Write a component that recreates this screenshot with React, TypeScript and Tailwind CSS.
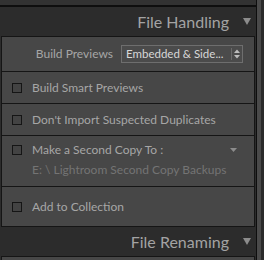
import React from "react";

const font = { fontFamily: "Lato, 'Liberation Sans', sans-serif" };

function Tri({ className }: { className?: string }) {
  return (
    <svg width="8" height="7" viewBox="0 0 8 7" className={className}>
      <polygon points="0,0 8,0 4,7" fill="currentColor" />
    </svg>
  );
}

function Check() {
  return <div className="w-[10px] h-[10px] border border-[#151515] bg-[#434343] shrink-0" />;
}

function Header({ title }: { title: string }) {
  return (
    <div className="h-[29px] flex items-center justify-end pr-[5px] shrink-0">
      <span className="text-[16px] text-[#a3a3a3] leading-none mt-[1px]">{title}</span>
      <Tri className="ml-[14px] text-[#8c8c8c]" />
    </div>
  );
}

export default function App() {
  return (
    <div className="w-[264px] h-[260px] bg-[#2c2c2c] flex overflow-hidden" style={font}>
      <div className="w-[256px] flex flex-col shrink-0">
        <div className="h-[5px] bg-[#323232] shrink-0" />
        <div className="h-[2px] bg-[#0e0e0e] shrink-0" />
        <Header title="File Handling" />
        <div className="ml-[1px] w-[254px] bg-[#474747] border border-[#151515] flex flex-col shrink-0">
          <div className="h-[35px] flex items-center justify-end pr-[11px] border-b border-[#151515]">
            <span className="text-[12px] text-[#a6a6a6] mr-[8px]">Build Previews</span>
            <div className="w-[122px] h-[18px] border border-[#6e6e6e] bg-[#4b4b4b] flex items-center">
              <span className="flex-1 text-[11.5px] text-[#d8d8d8] pl-[4px] leading-[14px] whitespace-nowrap">
                Embedded &amp; Side...
              </span>
              <div className="w-[1px] h-[12px] bg-[#6a6a6a]" />
              <svg width="10" height="12" viewBox="0 0 10 12" className="text-[#bdbdbd]">
                <polygon points="5,1.5 8,5 2,5" fill="currentColor" />
                <polygon points="2,7 8,7 5,10.5" fill="currentColor" />
              </svg>
            </div>
          </div>
          <div className="h-[32px] flex items-center pl-[10px] border-b border-[#151515]">
            <Check />
            <span className="ml-[10px] text-[12px] text-[#a6a6a6]">Build Smart Previews</span>
          </div>
          <div className="h-[32px] flex items-center pl-[10px] border-b border-[#151515]">
            <Check />
            <span className="ml-[10px] text-[12px] text-[#a6a6a6]">Don't Import Suspected Duplicates</span>
          </div>
          <div className="h-[51px] flex items-start pl-[10px] pt-[9px] pr-[17px] border-b border-[#151515]">
            <Check />
            <div className="ml-[10px] flex flex-col flex-1 -mt-[2px]">
              <div className="flex items-center justify-between">
                <span className="text-[12px] leading-[14px] text-[#a6a6a6]">Make a Second Copy To :</span>
                <svg width="7" height="4" viewBox="0 0 7 4" className="text-[#8c8c8c]">
                  <polygon points="0,0 7,0 3.5,4" fill="currentColor" />
                </svg>
              </div>
              <span className="mt-[6px] text-[12px] leading-[14px] text-[#747474]">
                E: \ Lightroom Second Copy Backups
              </span>
            </div>
          </div>
          <div className="h-[39px] flex items-center pl-[10px]">
            <Check />
            <span className="ml-[10px] text-[12px] text-[#a6a6a6]">Add to Collection</span>
          </div>
        </div>
        <Header title="File Renaming" />
        <div className="ml-[1px] w-[254px] h-[20px] bg-[#474747] border border-[#151515] shrink-0" />
      </div>
      <div className="w-[1px] bg-[#0e0e0e] shrink-0" />
      <div className="w-[4px] bg-[#4a4a4a] shrink-0" />
      <div className="flex-1 bg-[#2a2a2a]" />
    </div>
  );
}
